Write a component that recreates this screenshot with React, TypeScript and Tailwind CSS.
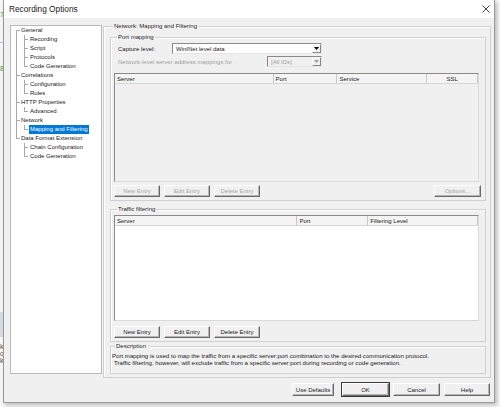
import React from 'react';

const tree = [
  { label: 'General', children: ['Recording', 'Script', 'Protocols', 'Code Generation'] },
  { label: 'Correlations', children: ['Configuration', 'Rules'] },
  { label: 'HTTP Properties', children: ['Advanced'] },
  { label: 'Network', children: ['Mapping and Filtering'] },
  { label: 'Data Format Extension', children: ['Chain Configuration', 'Code Generation'] },
];

const LINE = '#a8a8a8';

function Guide({ top, bottom, stub }: { top: boolean; bottom: boolean; stub: boolean }) {
  return (
    <svg width="8" height="9" className="shrink-0 block">
      {(top || bottom) && (
        <line x1="4.5" x2="4.5" y1={top ? 0 : 4.5} y2={bottom ? 9 : 4.5} stroke={LINE} strokeWidth="1" />
      )}
      {stub && <line x1="4" x2="8" y1="4.5" y2="4.5" stroke={LINE} strokeWidth="1" />}
    </svg>
  );
}

function Tree() {
  const rows: React.ReactNode[] = [];
  tree.forEach((node, i) => {
    const lastRoot = i === tree.length - 1;
    rows.push(
      <div key={node.label} className="flex h-[9px] items-center">
        <Guide top={i > 0} bottom={!lastRoot} stub />
        <span className="pl-[1px] whitespace-nowrap">{node.label}</span>
      </div>
    );
    node.children.forEach((c, j) => {
      const lastChild = j === node.children.length - 1;
      const selected = c === 'Mapping and Filtering';
      rows.push(
        <div key={node.label + c} className="flex h-[9px] items-center">
          <Guide top={!lastRoot} bottom={!lastRoot} stub={false} />
          <Guide top bottom={!lastChild} stub />
          <span
            className={`ml-[1px] px-[1px] leading-[9px] whitespace-nowrap ${
              selected ? 'bg-[#0078d7] text-white' : ''
            }`}
          >
            {c}
          </span>
        </div>
      );
    });
  });
  return (
    <div className="w-[92px] h-[349px] mt-[3px] bg-white border border-[#b9b9b9] pl-[1px] text-[6px] text-[#1a1a1a]">
      {rows}
    </div>
  );
}

function Btn({ label, className, disabled }: { label: string; className: string; disabled?: boolean }) {
  return (
    <div
      className={`flex items-center justify-center text-[6px] leading-none bg-[#f0f0f0] border border-t-white border-l-white border-r-[#696969] border-b-[#696969] shadow-[inset_-1px_-1px_0_#b5b5b5] ${
        disabled ? 'text-[#a6a6a6]' : 'text-[#1a1a1a]'
      } ${className}`}
    >
      {label}
    </div>
  );
}

function Select({ value, className, disabled }: { value: string; className: string; disabled?: boolean }) {
  return (
    <div
      className={`flex h-[11px] border border-t-[#8a8a8a] border-l-[#8a8a8a] border-r-[#e6e6e6] border-b-[#e6e6e6] ${
        disabled ? 'bg-[#f0f0f0] text-[#a0a0a0]' : 'bg-white text-[#1a1a1a]'
      } ${className}`}
    >
      <div className="flex-1 flex items-center pl-[3px] text-[6px] leading-none whitespace-nowrap">{value}</div>
      <div className="w-[9px] flex items-center justify-center bg-[#f0f0f0] border border-t-white border-l-white border-r-[#8a8a8a] border-b-[#8a8a8a]">
        <svg width="5" height="3" className="block">
          <path d="M0 0H5L2.5 3Z" fill={disabled ? '#a0a0a0' : '#000'} />
        </svg>
      </div>
    </div>
  );
}

function Header({ cols }: { cols: { label: string; w: string; center?: boolean }[] }) {
  return (
    <div className="flex h-[10px] bg-[#f4f4f4] border-b border-[#d5d5d5] text-[6px] leading-none text-[#1a1a1a]">
      {cols.map((c) => (
        <div
          key={c.label}
          className={`flex items-center border-r border-[#c8c8c8] px-[2px] ${c.w} ${c.center ? 'justify-center' : ''}`}
        >
          {c.label}
        </div>
      ))}
    </div>
  );
}

function Group({ title, className, children }: { title: string; className: string; children: React.ReactNode }) {
  return (
    <fieldset className={`border border-[#d0d0d0] shadow-[inset_1px_1px_0_#ffffff] ${className}`}>
      <legend className="ml-[3px] px-[1px] text-[6px] leading-[8px] text-[#1a1a1a] whitespace-nowrap">{title}</legend>
      {children}
    </fieldset>
  );
}

export default function App() {
  return (
    <div className="w-[500px] h-[407px] overflow-hidden bg-[#f7f7f7] flex font-['Liberation_Sans',Arial,sans-serif]">
      <div className="w-[3px] shrink-0 flex flex-col text-[7px] leading-none overflow-hidden">
        <span className="mt-[11px] text-[#3a9a3a]">7</span>
        <span className="mt-[20px] text-[#4a6cd4]">-</span>
        <span className="mt-[20px] text-[#3a9a3a]">8</span>
        <div className="mt-[240px] h-[25px] bg-[#d8dde3]" />
        <span className="mt-[6px] text-[#555]">k</span>
        <span className="text-[#555]">o</span>
        <span className="text-[#555]">k</span>
      </div>
      <div className="w-[492px] h-[403px] shrink-0 flex flex-col border-l border-r border-b border-[#9a9a9a] bg-[#f0f0f0] shadow-[2px_2px_4px_rgba(0,0,0,0.25)]">
        <div className="h-[18px] bg-white flex items-center justify-between pl-[5px] pr-[4px]">
          <span className="text-[8.3px] text-[#1a1a1a] leading-none">Recording Options</span>
          <svg width="8" height="8" className="block">
            <path d="M0.5 0.5L7.5 7.5M7.5 0.5L0.5 7.5" stroke="#444" strokeWidth="1" />
          </svg>
        </div>
        <div className="flex pt-[4px] pl-[6px] gap-[1px]">
          <Tree />
          <Group title="Network: Mapping and Filtering" className="w-[388px] h-[356px] pl-[6px]">
            <Group title="Port mapping" className="w-[376px] h-[168px] mt-[3px] pl-[3px]">
              <div className="flex items-center mt-[2px] pl-[4px]">
                <span className="w-[54px] text-[6px] leading-none text-[#1a1a1a]">Capture level:</span>
                <Select value="WinINet level data" className="w-[150px]" />
              </div>
              <div className="flex items-center mt-[2px] pl-[4px]">
                <span className="w-[149px] text-[6px] leading-none text-[#a0a0a0] whitespace-nowrap">
                  Network-level server address mappings for :
                </span>
                <Select value="[All IDs]" className="w-[55px]" disabled />
              </div>
              <div className="w-[365px] h-[109px] mt-[6px] border border-t-[#8a8a8a] border-l-[#8a8a8a] border-r-[#dadada] border-b-[#dadada] bg-[#f0f0f0]">
                <Header
                  cols={[
                    { label: 'Server', w: 'w-[159px]' },
                    { label: 'Port', w: 'w-[64px]' },
                    { label: 'Service', w: 'w-[90px]' },
                    { label: 'SSL', w: 'w-[51px]', center: true },
                  ]}
                />
              </div>
              <div className="w-[367px] flex mt-[3px] gap-[4px]">
                <Btn label="New Entry" className="w-[46px] h-[12px]" disabled />
                <Btn label="Edit Entry" className="w-[46px] h-[12px]" disabled />
                <Btn label="Delete Entry" className="w-[46px] h-[12px]" disabled />
                <div className="flex-1" />
                <Btn label="Options..." className="w-[47px] h-[12px]" disabled />
              </div>
            </Group>
            <Group title="Traffic filtering" className="w-[376px] h-[137px] mt-[4px] pl-[3px]">
              <div className="w-[365px] h-[106px] mt-[2px] border border-t-[#8a8a8a] border-l-[#8a8a8a] border-r-[#dadada] border-b-[#dadada] bg-white">
                <Header
                  cols={[
                    { label: 'Server', w: 'w-[183px]' },
                    { label: 'Port', w: 'w-[71px]' },
                    { label: 'Filtering Level', w: 'w-[110px]' },
                  ]}
                />
              </div>
              <div className="flex mt-[5px] gap-[4px]">
                <Btn label="New Entry" className="w-[46px] h-[12px]" />
                <Btn label="Edit Entry" className="w-[46px] h-[12px]" />
                <Btn label="Delete Entry" className="w-[46px] h-[12px]" />
              </div>
            </Group>
            <Group title="Description :" className="w-[376px] h-[32px] pl-[1px]">
              <div className="pt-[2px] text-[6.1px] leading-[7px] text-[#1a1a1a] whitespace-nowrap">
                <div>
                  Port mapping is used to map the traffic from a specific server:port combination to the desired
                  communication protocol.
                </div>
                <div className="pl-[2px]">
                  Traffic filtering, however, will exclude traffic from a specific server:port during recording or code
                  generation.
                </div>
              </div>
            </Group>
          </Group>
        </div>
        <div className="flex justify-end gap-[4px] mt-[5px] pr-[4px]">
          <Btn label="Use Defaults" className="w-[42px] h-[13px] mr-[4px]" />
          <Btn label="OK" className="w-[47px] h-[13px] outline outline-1 outline-[#3c3c3c]" />
          <Btn label="Cancel" className="w-[47px] h-[13px]" />
          <Btn label="Help" className="w-[46px] h-[13px]" />
        </div>
      </div>
    </div>
  );
}
